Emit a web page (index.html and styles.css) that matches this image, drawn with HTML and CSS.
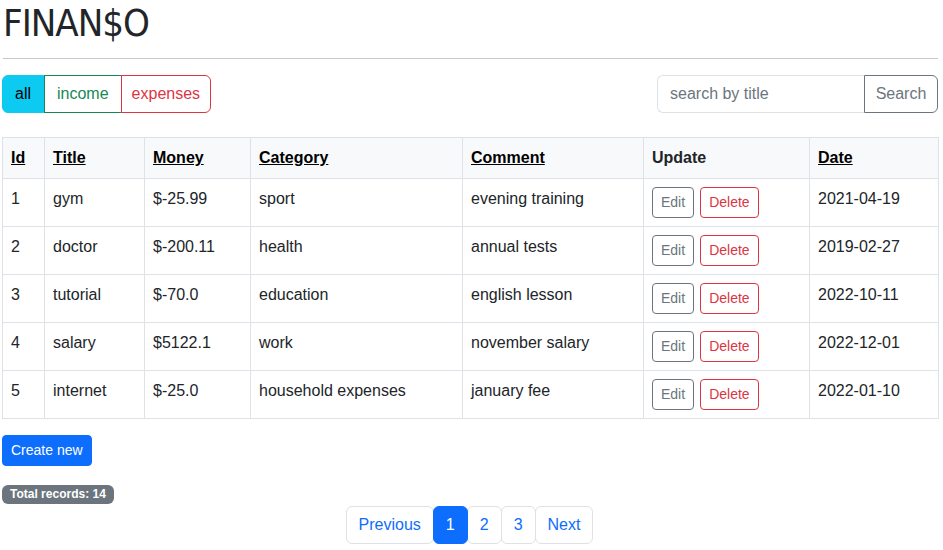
FILE: index.html
```html
<!DOCTYPE html>
<html lang="en">
<head>
<meta charset="utf-8">
<title>FINAN$O</title>
<link rel="stylesheet" href="styles.css">
</head>
<body>
<div class="page">
  <h1 class="brand">FINAN$O</h1>
  <hr class="divider">
  <div class="toolbar">
    <div class="btn-group">
      <button class="btn btn-all">all</button>
      <button class="btn btn-income">income</button>
      <button class="btn btn-expenses">expenses</button>
    </div>
    <form class="search">
      <input class="search-input" type="text" placeholder="search by title">
      <button class="btn btn-search" type="button">Search</button>
    </form>
  </div>
  <table class="records">
    <thead>
      <tr>
        <th class="c-id"><a href="#">Id</a></th>
        <th class="c-title"><a href="#">Title</a></th>
        <th class="c-money"><a href="#">Money</a></th>
        <th class="c-cat"><a href="#">Category</a></th>
        <th class="c-comment"><a href="#">Comment</a></th>
        <th class="c-update">Update</th>
        <th class="c-date"><a href="#">Date</a></th>
      </tr>
    </thead>
    <tbody>
      <tr><td>1</td><td>gym</td><td>$-25.99</td><td>sport</td><td>evening training</td><td><div class="actions"><button class="btn-sm btn-edit">Edit</button><button class="btn-sm btn-delete">Delete</button></div></td><td>2021-04-19</td></tr>
      <tr><td>2</td><td>doctor</td><td>$-200.11</td><td>health</td><td>annual tests</td><td><div class="actions"><button class="btn-sm btn-edit">Edit</button><button class="btn-sm btn-delete">Delete</button></div></td><td>2019-02-27</td></tr>
      <tr><td>3</td><td>tutorial</td><td>$-70.0</td><td>education</td><td>english lesson</td><td><div class="actions"><button class="btn-sm btn-edit">Edit</button><button class="btn-sm btn-delete">Delete</button></div></td><td>2022-10-11</td></tr>
      <tr><td>4</td><td>salary</td><td>$5122.1</td><td>work</td><td>november salary</td><td><div class="actions"><button class="btn-sm btn-edit">Edit</button><button class="btn-sm btn-delete">Delete</button></div></td><td>2022-12-01</td></tr>
      <tr><td>5</td><td>internet</td><td>$-25.0</td><td>household expenses</td><td>january fee</td><td><div class="actions"><button class="btn-sm btn-edit">Edit</button><button class="btn-sm btn-delete">Delete</button></div></td><td>2022-01-10</td></tr>
    </tbody>
  </table>
  <button class="btn-sm btn-create">Create new</button>
  <div class="badge-row"><span class="badge">Total records: 14</span></div>
  <nav class="pagination">
    <a class="page-link" href="#">Previous</a>
    <a class="page-link active" href="#">1</a>
    <a class="page-link" href="#">2</a>
    <a class="page-link" href="#">3</a>
    <a class="page-link" href="#">Next</a>
  </nav>
</div>
</body>
</html>
```
FILE: styles.css
```css
* { box-sizing: border-box; }
html, body { margin: 0; padding: 0; background: #fff; }
body {
  font-family: "Liberation Sans", Arial, sans-serif;
  font-size: 16px;
  line-height: 24px;
  color: #212529;
}
.page { padding: 0 5px 0 2px; }
.brand {
  margin: 0;
  font-family: "DejaVu Sans Condensed", "Liberation Sans", sans-serif;
  font-size: 38px;
  line-height: 46px;
  letter-spacing: -1px;
  font-weight: 400;
  padding: 0 0 0 1px;
}
.divider {
  margin: 12px 0 16px 1px;
  border: 0;
  border-top: 1px solid #c8c8c8;
  height: 0;
}
.toolbar {
  display: flex;
  justify-content: space-between;
  align-items: center;
  margin-bottom: 24px;
}
.btn {
  font-family: inherit;
  font-size: 16px;
  line-height: 24px;
  padding: 6px 12px;
  border: 1px solid transparent;
  background: #fff;
  cursor: pointer;
  margin: 0;
}
.btn-group { display: flex; }
.btn-all {
  background: #0dcaf0;
  border-color: #0dcaf0;
  color: #000;
  border-radius: 6px 0 0 6px;
}
.btn-income { border-color: #198754; color: #198754; padding: 6px 12px; }
.btn-expenses {
  border-color: #dc3545;
  color: #dc3545;
  border-radius: 0 6px 6px 0;
  margin-left: -1px;
  padding: 6px 10px;
}
.search { display: flex; margin: 0; }
.search-input {
  width: 207px;
  height: 38px;
  font-family: inherit;
  font-size: 16px;
  padding: 6px 12px;
  border: 1px solid #dee2e6;
  border-right: 0;
  border-radius: 6px 0 0 6px;
  color: #212529;
}
.search-input::placeholder { color: #6c757d; }
.btn-search {
  border-color: #6c757d;
  color: #6c757d;
  border-radius: 0 6px 6px 0;
  width: 74px;
  padding: 6px 0;
}
.records {
  width: 936px;
  border-collapse: collapse;
  table-layout: fixed;
  margin-bottom: 16px;
}
.records th, .records td {
  border: 1px solid #dee2e6;
  padding: 8px 8px;
  text-align: left;
  vertical-align: top;
}
.records th { background: #f8f9fa; font-weight: 700; }
.records th a { color: #000; text-decoration: underline; }
.c-id { width: 42px; }
.c-title { width: 100px; }
.c-money { width: 106px; }
.c-cat { width: 212px; }
.c-comment { width: 181px; }
.c-update { width: 166px; }
.c-date { width: 129px; }
.actions { display: flex; gap: 6px; }
.btn-sm {
  font-family: inherit;
  font-size: 14px;
  line-height: 21px;
  padding: 4px 8px;
  border: 1px solid transparent;
  border-radius: 4px;
  background: #fff;
  cursor: pointer;
  margin: 0;
}
.btn-edit { border-color: #6c757d; color: #6c757d; }
.btn-delete { border-color: #dc3545; color: #dc3545; }
.btn-create {
  background: #0d6efd;
  border-color: #0d6efd;
  color: #fff;
  display: block;
}
.badge-row { margin-top: 19px; height: 19px; }
.badge {
  display: inline-block;
  background: #6c757d;
  color: #fff;
  font-size: 12px;
  font-weight: 700;
  line-height: 19px;
  padding: 0 8px;
  border-radius: 6px;
  vertical-align: top;
}
.pagination {
  display: flex;
  justify-content: center;
  margin-top: 2px;
}
.page-link {
  display: block;
  padding: 6px 12px;
  line-height: 24px;
  border: 1px solid #dee2e6;
  border-radius: 6px;
  color: #0d6efd;
  text-decoration: none;
  margin-left: -1px;
  background: #fff;
}
.page-link.active {
  background: #0d6efd;
  border-color: #0d6efd;
  color: #fff;
  position: relative;
}
```
